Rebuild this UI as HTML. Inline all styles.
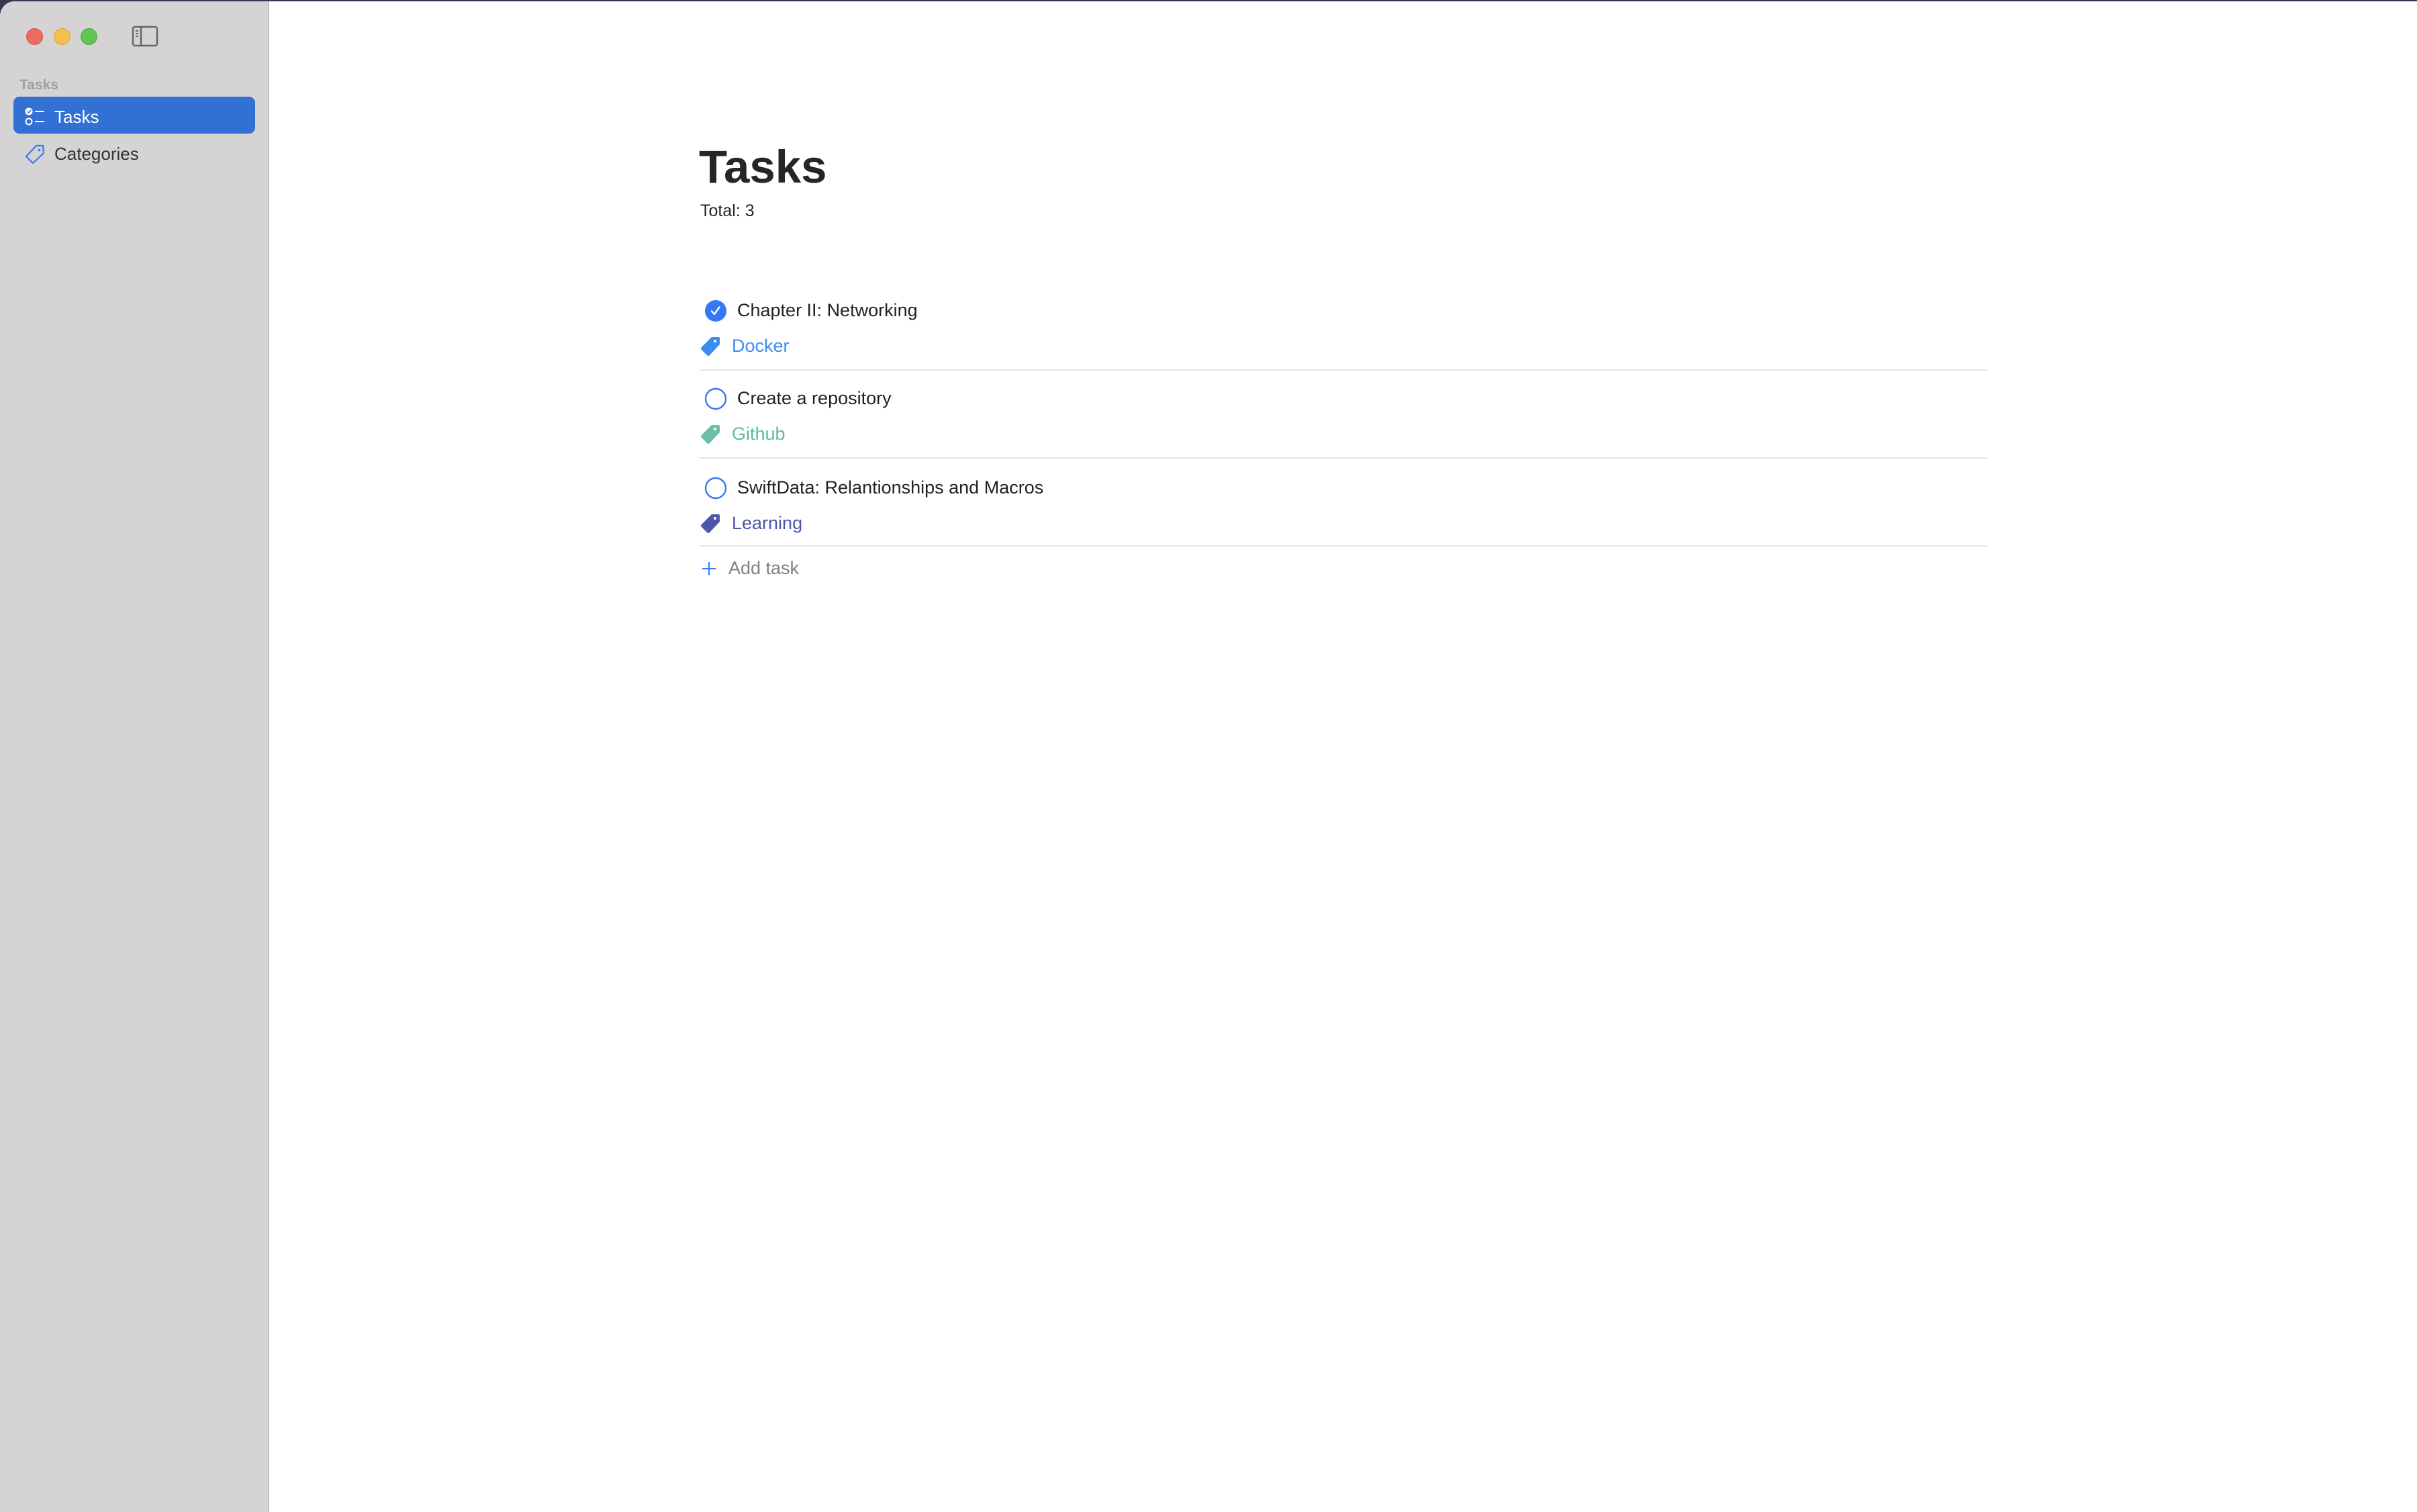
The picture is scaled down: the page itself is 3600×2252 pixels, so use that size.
<!DOCTYPE html>
<html><head><meta charset="utf-8"><style>
*{margin:0;padding:0;box-sizing:border-box}
html,body{width:3600px;height:2252px;overflow:hidden;background:#3a3550}
body{font-family:"Liberation Sans",Arial,sans-serif;position:relative}
.win{position:absolute;left:0;top:2px;width:3600px;height:2250px;background:#fff;border-top-left-radius:22px;overflow:hidden}
.side{position:absolute;left:0;top:0;width:401px;height:100%;background:#d6d3d5;border-right:2px solid #c4c2c4}
.t{position:absolute;white-space:nowrap}
.dot{position:absolute;width:25px;height:25px;border-radius:50%}
.sel{position:absolute;left:20px;top:142px;width:360px;height:55px;background:#3370d4;border-radius:9px}
.div{position:absolute;left:1042px;width:1918px;height:2px;background:#e6e6e6}
.task{font-size:27px;color:#222}
.tag{font-size:27px}
</style></head><body>
<div class="win">
<div class="side">
  <div class="dot" style="left:39px;top:40px;background:#ec6a5e;border:1px solid #d55a4f"></div>
  <div class="dot" style="left:80px;top:40px;background:#f4bf4f;border:1px solid #d9a740"></div>
  <div class="dot" style="left:120px;top:40px;background:#61c554;border:1px solid #50a945"></div>
  <svg style="position:absolute;left:196px;top:36px" width="40" height="32" viewBox="0 0 40 32"><rect x="2" y="2" width="36" height="28" rx="3" fill="none" stroke="#666" stroke-width="2.5"/><line x1="14" y1="2" x2="14" y2="30" stroke="#666" stroke-width="2.5"/><line x1="6" y1="8" x2="10" y2="8" stroke="#666" stroke-width="2"/><line x1="6" y1="12" x2="10" y2="12" stroke="#666" stroke-width="2"/><line x1="6" y1="16" x2="10" y2="16" stroke="#666" stroke-width="2"/></svg>
  <div class="t" style="left:29px;top:113px;font-size:21px;font-weight:bold;color:#a19fa1">Tasks</div>
  <div class="sel"></div>
  <svg style="position:absolute;left:37px;top:158px" width="32" height="28" viewBox="0 0 32 28"><circle cx="6" cy="6" r="5.5" fill="#fff"/><path d="M3.5 6 L5.5 8 L9 4" stroke="#3370d4" stroke-width="1.6" fill="none"/><circle cx="6" cy="21" r="4.5" fill="none" stroke="#fff" stroke-width="2"/><line x1="15" y1="6" x2="29" y2="6" stroke="#fff" stroke-width="2"/><line x1="15" y1="21" x2="29" y2="21" stroke="#fff" stroke-width="2"/></svg>
  <div class="t" style="left:81px;top:157px;font-size:26px;color:#fff">Tasks</div>
  <svg style="position:absolute;left:36px;top:212px" width="32" height="32" viewBox="0 0 32 32"><path d="M18 3 L28 3 L29 14 L13 29 L3 19 Z" fill="none" stroke="#2f7cf6" stroke-width="2.2" stroke-linejoin="round"/><circle cx="22.5" cy="9.5" r="1.8" fill="#2f7cf6"/></svg>
  <div class="t" style="left:81px;top:212px;font-size:26px;color:#333">Categories</div>
</div>

<div class="t" style="left:1041px;top:207px;font-size:69px;font-weight:bold;color:#262626">Tasks</div>
<div class="t" style="left:1043px;top:298px;font-size:25px;color:#262626">Total: 3</div>

<!-- row 1 -->
<svg style="position:absolute;left:1049px;top:444px" width="34" height="34" viewBox="0 0 34 34"><circle cx="17" cy="17" r="16" fill="#3478f6"/><path d="M11 17.5 L15 22 L22.5 11.5" stroke="#fff" stroke-width="2.4" fill="none" stroke-linecap="round" stroke-linejoin="round"/></svg>
<div class="t task" style="left:1098px;top:445px">Chapter II: Networking</div>
<svg style="position:absolute;left:1043px;top:499px" width="30" height="30" viewBox="0 0 30 30"><path d="M17 1 L27 1 Q29 1 29 3 L29 12 L14 28 Q12 30 10 28 L2 20 Q0 18 2 16 Z" fill="#3b8cf0"/><circle cx="22" cy="7" r="2" fill="#fff"/></svg>
<div class="t tag" style="left:1090px;top:498px;color:#3b8cf0">Docker</div>
<div class="div" style="top:548px"></div>

<!-- row 2 -->
<svg style="position:absolute;left:1049px;top:575px" width="34" height="34" viewBox="0 0 34 34"><circle cx="17" cy="17" r="15" fill="none" stroke="#3478f6" stroke-width="2.4"/></svg>
<div class="t task" style="left:1098px;top:576px">Create a repository</div>
<svg style="position:absolute;left:1043px;top:630px" width="30" height="30" viewBox="0 0 30 30"><path d="M17 1 L27 1 Q29 1 29 3 L29 12 L14 28 Q12 30 10 28 L2 20 Q0 18 2 16 Z" fill="#6bbfa8"/><circle cx="22" cy="7" r="2" fill="#fff"/></svg>
<div class="t tag" style="left:1090px;top:629px;color:#5fbaa2">Github</div>
<div class="div" style="top:679px"></div>

<!-- row 3 -->
<svg style="position:absolute;left:1049px;top:708px" width="34" height="34" viewBox="0 0 34 34"><circle cx="17" cy="17" r="15" fill="none" stroke="#3478f6" stroke-width="2.4"/></svg>
<div class="t task" style="left:1098px;top:709px">SwiftData: Relantionships and Macros</div>
<svg style="position:absolute;left:1043px;top:763px" width="30" height="30" viewBox="0 0 30 30"><path d="M17 1 L27 1 Q29 1 29 3 L29 12 L14 28 Q12 30 10 28 L2 20 Q0 18 2 16 Z" fill="#4d57aa"/><circle cx="22" cy="7" r="2" fill="#fff"/></svg>
<div class="t tag" style="left:1090px;top:762px;color:#4d57aa">Learning</div>
<div class="div" style="top:810px"></div>

<svg style="position:absolute;left:1044px;top:833px" width="24" height="24" viewBox="0 0 24 24"><line x1="12" y1="2" x2="12" y2="22" stroke="#3478f6" stroke-width="2"/><line x1="2" y1="12" x2="22" y2="12" stroke="#3478f6" stroke-width="2"/></svg>
<div class="t" style="left:1085px;top:829px;font-size:27px;color:#808080">Add task</div>
</div>
</body></html>
